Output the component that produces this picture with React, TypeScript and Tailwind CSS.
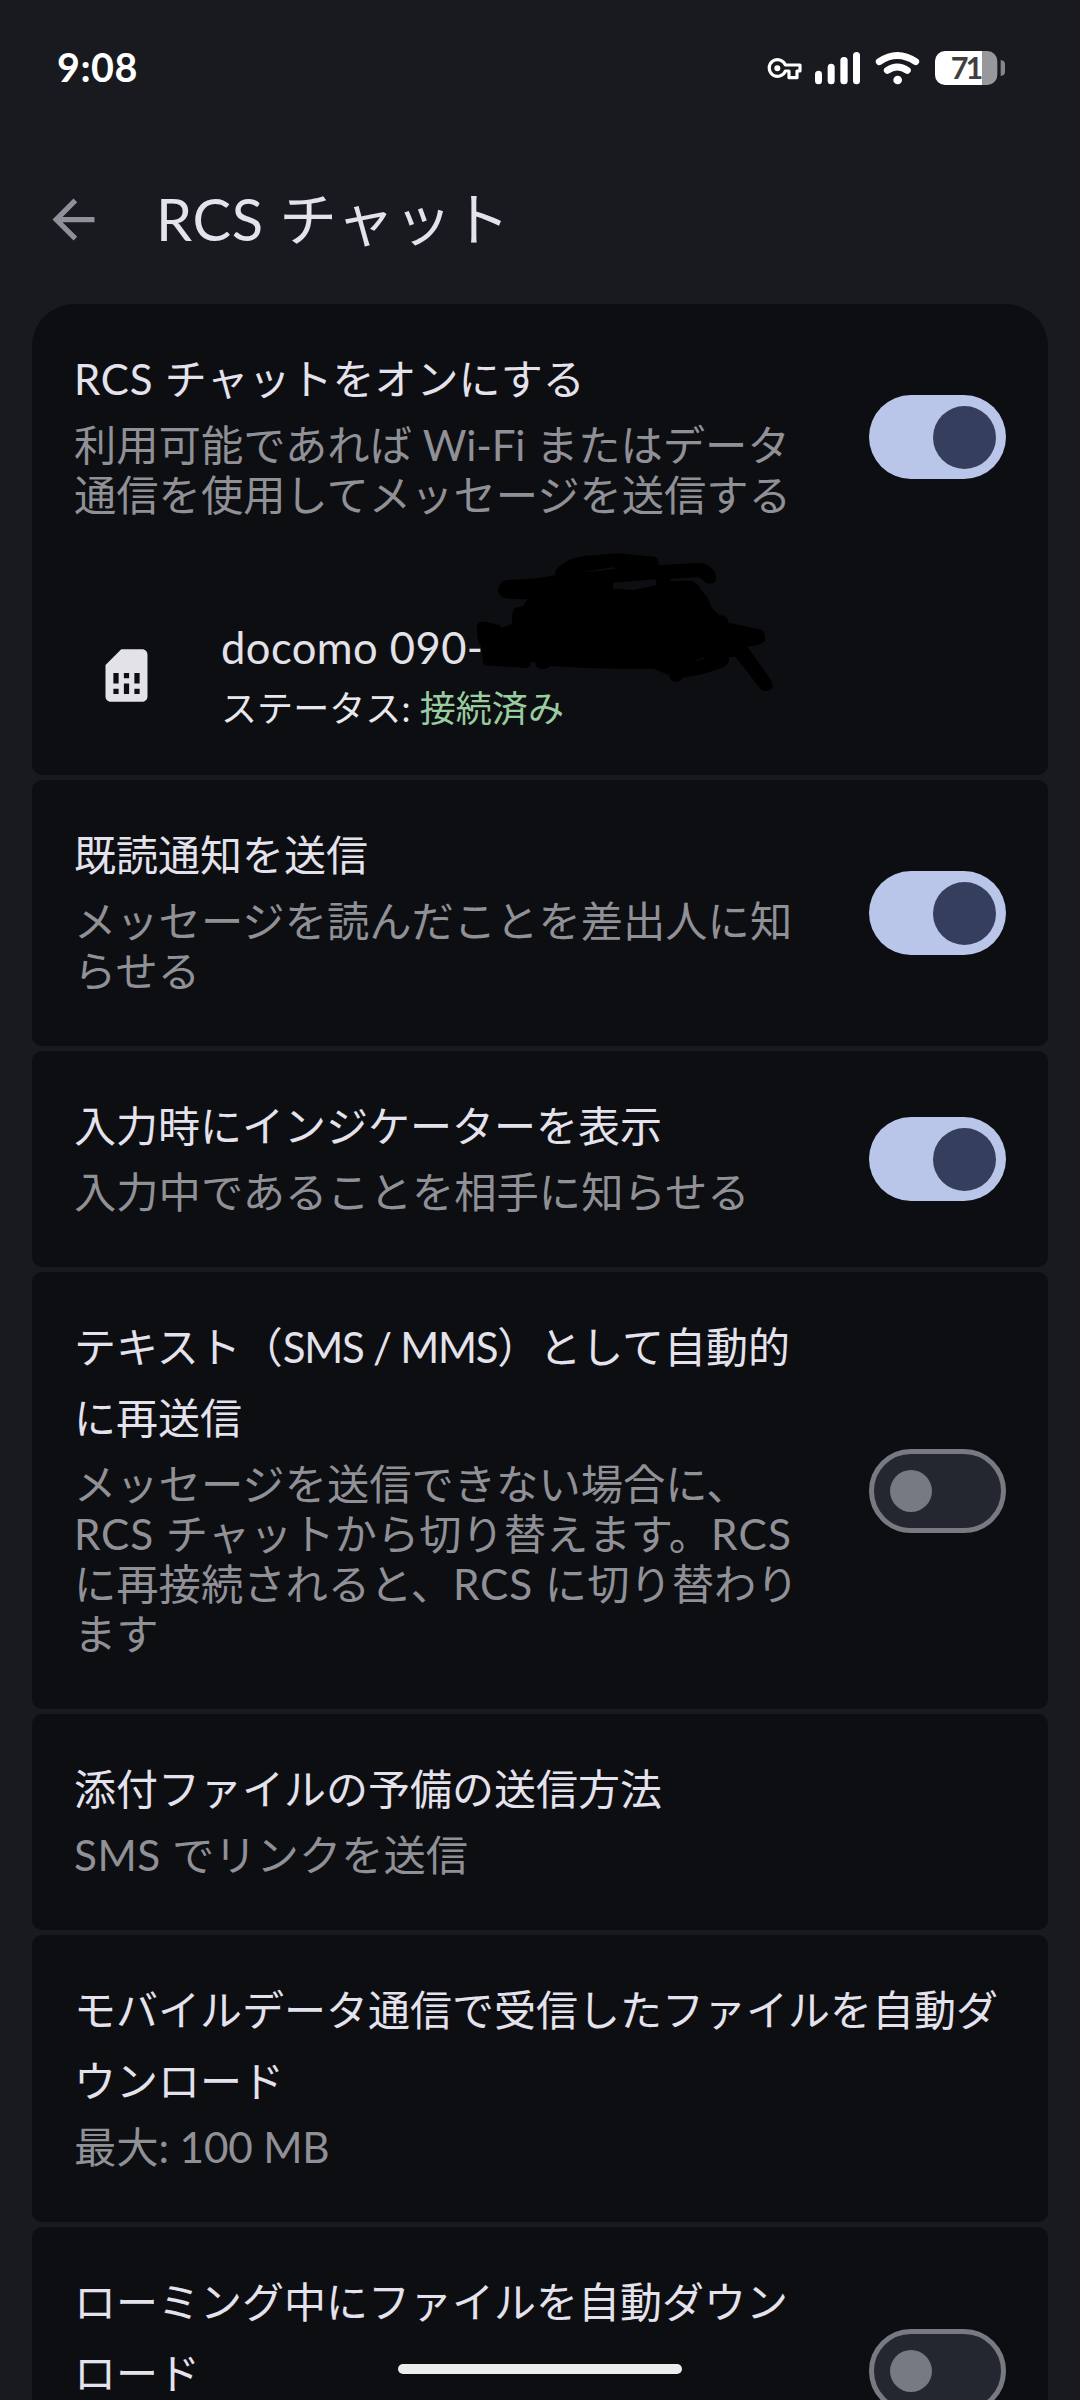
import type { ReactNode } from "react";

type Segment = { text: string; className?: string };

function Line({ segments }: { segments: Segment[] }) {
  return (
    <div className="whitespace-pre">
      {segments.map((s, i) => (
        <span key={i} className={s.className}>
          {s.text}
        </span>
      ))}
    </div>
  );
}

function Toggle({ on }: { on: boolean }) {
  return on ? (
    <div className="flex h-[84px] w-[137px] shrink-0 items-center justify-end rounded-full bg-[#b9c6ea] pr-[10px]">
      <div className="size-[63px] rounded-full bg-[#353f5d]" />
    </div>
  ) : (
    <div className="flex h-[84px] w-[137px] shrink-0 items-center rounded-full border-[5px] border-[#777983] bg-[#24272f] pl-[16px]">
      <div className="size-[42px] rounded-full bg-[#777983]" />
    </div>
  );
}

type RowProps = { title: Segment[][]; sub: Segment[][]; on?: boolean };

function Row({ title, sub, on }: RowProps) {
  return (
    <div className="flex items-center justify-between pt-[40px] pr-[42px] pb-[50px] pl-[42px]">
      <div>
        <div className="text-[42px] leading-[71px] text-[#e4e2ec]">
          {title.map((l, i) => (
            <Line key={i} segments={l} />
          ))}
        </div>
        <div className="mt-[5px] text-[42.3px] leading-[50px] text-[#909097]">
          {sub.map((l, i) => (
            <Line key={i} segments={l} />
          ))}
        </div>
      </div>
      {on !== undefined && (
        <div className="-my-10 translate-y-[5px]">
          <Toggle on={on} />
        </div>
      )}
    </div>
  );
}

function Card({ children, className = "rounded-[10px]" }: { children: ReactNode; className?: string }) {
  return <section className={`relative bg-[#0d0e12] ${className}`}>{children}</section>;
}

const t = (text: string, className?: string): Segment => ({ text, className });

const rows: RowProps[] = [
  {
    title: [[t("既読通知を送信")]],
    sub: [[t("メッセージを読んだことを差出人に知")], [t("らせる")]],
    on: true,
  },
  {
    title: [[t("入力時にインジケーターを表示")]],
    sub: [[t("入力中であることを相手に知らせる")]],
    on: true,
  },
  {
    title: [[t("テキスト（"), t("SMS / MMS", "tracking-[-1.25px]"), t("）として自動的")], [t("に再送信")]],
    sub: [
      [t("メッセージを送信できない場合に、")],
      [t("RCS ", "tracking-[0.9px]"), t("チャットから切り替えます。"), t("RCS", "tracking-[1.2px]")],
      [t("に再接続されると、"), t("RCS ", "tracking-[0.9px]"), t("に切り替わり")],
      [t("ます")],
    ],
    on: false,
  },
  {
    title: [[t("添付ファイルの予備の送信方法")]],
    sub: [[t("SMS ", "tracking-[0.5px]"), t("でリンクを送信")]],
  },
  {
    title: [[t("モバイルデータ通信で受信したファイルを自動ダ")], [t("ウンロード")]],
    sub: [[t("最大"), t(": 100 MB", "tracking-[-0.2px]")]],
  },
  {
    title: [[t("ローミング中にファイルを自動ダウン")], [t("ロード")]],
    sub: [[t(" ")]],
    on: false,
  },
];

function StatusIcons() {
  return (
    <svg className="h-[80px] w-[300px]" viewBox="0 0 900 240" fill="none">
      <g stroke="#fff" strokeWidth="9.5" strokeLinejoin="round">
        <path d="M136 105H180V123H171V143H147V123H136A25 25 0 1 1 136 105Z" />
      </g>
      <circle cx="112" cy="115" r="9" fill="#fff" />
      <g fill="#fff">
        <rect x="225" y="122" width="21" height="41" rx="10.5" />
        <rect x="263" y="101" width="21" height="62" rx="10.5" />
        <rect x="301" y="81" width="22" height="82" rx="10.5" />
        <rect x="339" y="66" width="21" height="97" rx="10.5" />
      </g>
      <g stroke="#fff" strokeWidth="21" strokeLinecap="round">
        <path d="M418 95Q472 58 527 95" />
        <path d="M442 121Q472 101 502 121" />
      </g>
      <circle cx="473" cy="150" r="13" fill="#fff" />
      <path d="M726 63H742A30 30 0 0 1 772 93V135A30 30 0 0 1 742 165H726Z" fill="#97989b" />
      <path d="M726 63H615A30 30 0 0 0 585 93V135A30 30 0 0 0 615 165H726Z" fill="#fff" />
      <path d="M782 90Q795 92 795 102V126Q795 136 782 138Z" fill="#85868a" />
      <text x="632" y="147" fontSize="92" fontWeight="700" fill="#3f3f42" textLength="98" className="font-['Lato']">
        71
      </text>
    </svg>
  );
}

function Scribble() {
  return (
    <svg className="absolute top-[226px] left-[408px] h-[260px] w-[360px]" viewBox="0 0 1080 780" fill="#000">
      <path
        fillRule="evenodd"
        d="M112 282Q120 272 140 276L180 286L182 294L216 282Q214 240 225 234Q238 228 248 230L262 208L205 206Q174 204 174 178Q176 152 205 150L280 146L346 136Q344 118 360 108Q390 84 430 78L535 70L645 80Q658 86 656 106L780 98Q800 98 822 122Q832 140 826 155Q816 164 800 160L778 142L690 146L692 153L755 152Q775 160 782 178L802 202L816 234L838 256Q862 254 866 278L966 300Q978 312 974 332Q968 342 950 346L922 350L990 446Q1002 462 996 476Q984 488 964 480L886 380L868 382Q868 404 850 412L790 432L726 444Q722 456 706 456Q690 454 688 436L640 416L545 416L440 414L330 408Q324 418 304 418L288 410L286 396L272 396Q270 412 260 414L136 406Q126 400 128 380L122 346Q108 330 112 282ZM430 126L520 112L526 116L470 124ZM519 158L648 148L648 166L580 180L519 176ZM762 392L794 382L790 388L762 394Z"
      />
    </svg>
  );
}

export default function App() {
  return (
    <div className="relative flex h-[2400px] w-[1080px] flex-col overflow-hidden bg-[#191a1f] font-['Lato','Noto_Sans_CJK_JP',sans-serif]">
      <div className="flex h-[136px] shrink-0 items-start justify-between pt-[30px] pr-[40px] pl-[57px]">
        <div className="text-[39.5px] leading-[73px] font-bold tracking-[0.5px] text-white">9:08</div>
        <StatusIcons />
      </div>

      <header className="flex h-[168px] shrink-0 items-center pb-[2px] pl-[42px]">
        <svg className="size-[63px]" viewBox="0 0 24 24" fill="#90909a">
          <path d="M20 11H7.83l5.59-5.59L12 4l-8 8 8 8 1.41-1.41L7.83 13H20v-2z" />
        </svg>
        <h1 className="ml-[51px] text-[57.75px] leading-[80px] whitespace-pre text-[#e4e2ec]">
          <span className="tracking-[0.7px]">RCS </span>チャット
        </h1>
      </header>

      <main className="mx-8 flex flex-col gap-[5px]">
        <Card className="rounded-t-[42px] rounded-b-[10px]">
          <Row
            title={[[t("RCS ", "tracking-[0.8px]"), t("チャットをオンにする")]]}
            sub={[
              [t("利用可能であれば "), t("Wi-Fi ", "tracking-[-0.2px]"), t("またはデータ")],
              [t("通信を使用してメッセージを送信する")],
            ]}
            on
          />
          <div className="flex h-[205px] items-start pt-[48px] pl-[63px]">
            <svg className="mt-[26px] size-[63px]" viewBox="0 0 24 24" fill="#e4e2e9">
              <path d="M19.99 4c0-1.1-.89-2-1.99-2h-8L4 8v12c0 1.1.9 2 2 2h12.01c1.1 0 1.99-.9 1.99-2l-.01-16zM9 19H7v-2h2v2zm8 0h-2v-2h2v2zm-8-4H7v-4h2v4zm4 4h-2v-4h2v4zm0-6h-2v-2h2v2zm4 2h-2v-4h2v4z" />
            </svg>
            <div className="-mt-px ml-[63px]">
              <div className="text-[43.5px] leading-[60px] tracking-[0.45px] whitespace-pre text-[#e4e2e9]">docomo 090-</div>
              <div className="text-[36.1px] leading-[62px] whitespace-pre text-[#e8e8ec]">
                ステータス: <span className="text-[#98cd9f]">接続済み</span>
              </div>
            </div>
          </div>
          <Scribble />
        </Card>
        {rows.map((r, i) => (
          <Card key={i}>
            <Row {...r} />
          </Card>
        ))}
      </main>

      <div className="absolute bottom-[26px] left-[398px] h-[10px] w-[284px] rounded-full bg-[#ededed]" />
    </div>
  );
}
